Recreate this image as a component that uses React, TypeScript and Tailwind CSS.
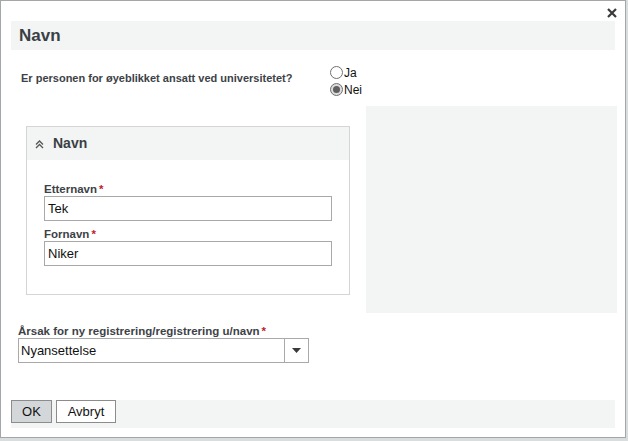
const font = { fontFamily: '"Liberation Sans", Arial, sans-serif' };

function Radio({ label, checked }: { label: string; checked?: boolean }) {
  return (
    <label className="flex items-center h-[17px] text-[12px] text-[#111]">
      <span
        className={`w-[13px] h-[13px] rounded-full border border-[#707070] flex items-center justify-center ${
          checked ? "bg-[#dcdcdc]" : "bg-white"
        }`}
      >
        {checked && <span className="w-[7px] h-[7px] rounded-full bg-[#5f5f5f]" />}
      </span>
      <span className="ml-[1px]">{label}</span>
    </label>
  );
}

function Field({ label, value }: { label: string; value: string }) {
  return (
    <div className="flex flex-col">
      <span className="text-[11.5px] font-bold text-[#3d4247] leading-[13px]">
        {label}
        <span className="text-[#c0202a] ml-[2px]">*</span>
      </span>
      <div className="h-[25px] border border-[#a9a9a9] flex items-center pl-[3px] text-[13px] text-[#111]">
        {value}
      </div>
    </div>
  );
}

export default function App() {
  return (
    <div className="w-[628px] h-[441px] bg-[#dadddd] overflow-hidden" style={font}>
      <div className="w-[626px] h-[438px] bg-white border border-[#a3a7a9] flex flex-col">
        <div className="h-[20px] flex justify-end items-center pr-[8px] pt-[4px]">
          <svg width="10" height="10" viewBox="0 0 10 10">
            <path d="M1 1 L9 9 M9 1 L1 9" stroke="#3a3a3a" strokeWidth="2.2" />
          </svg>
        </div>
        <div className="mx-[10px] h-[29px] bg-[#f3f4f4] flex items-center pl-[8px]">
          <span className="text-[17px] font-bold text-[#3a3f44]">Navn</span>
        </div>

        <div className="flex mt-[14px] h-[42px]">
          <div className="w-[329px] pl-[20px] pt-[6px] text-[11px] font-bold text-[#3d4247] whitespace-nowrap">
            Er personen for øyeblikket ansatt ved universitetet?
          </div>
          <div className="flex flex-col">
            <Radio label="Ja" />
            <Radio label="Nei" checked />
          </div>
        </div>

        <div className="flex items-start">
          <div className="ml-[25px] mt-[20px] w-[324px] border border-[#d3d5d6]">
            <div className="h-[33px] bg-[#f3f4f4] flex items-center pl-[8px]">
              <svg width="9" height="9" viewBox="0 0 9 9" className="mt-[1px]">
                <path d="M1 4.5 L4.5 1 L8 4.5 M1 8 L4.5 4.5 L8 8" stroke="#555" strokeWidth="1.3" fill="none" />
              </svg>
              <span className="ml-[9px] text-[14px] font-bold text-[#3a3f44]">Navn</span>
            </div>
            <div className="pt-[23px] pb-[28px] pl-[17px] pr-[17px] flex flex-col gap-[7px]">
              <Field label="Etternavn" value="Tek" />
              <Field label="Fornavn" value="Niker" />
            </div>
          </div>
          <div className="ml-[16px] w-[251px] h-[207px] bg-[#f3f4f4]" />
        </div>

        <div className="ml-[17px] mt-[12px] flex flex-col">
          <span className="text-[11.5px] font-bold text-[#3d4247] leading-[13px]">
            Årsak for ny registrering/registrering u/navn
            <span className="text-[#c0202a] ml-[2px]">*</span>
          </span>
          <div className="w-[291px] h-[25px] border border-[#a9a9a9] flex items-center">
            <span className="flex-1 pl-[2px] text-[13px] text-[#111]">Nyansettelse</span>
            <div className="w-[24px] h-full border-l border-[#a9a9a9] flex items-center justify-center">
              <svg width="9" height="5" viewBox="0 0 9 5">
                <path d="M0 0 L9 0 L4.5 5 Z" fill="#3a3a3a" />
              </svg>
            </div>
          </div>
        </div>

        <div className="mt-[37px] mx-[10px] h-[28px] bg-[#f3f4f4] flex items-start gap-[4px]">
          <button className="w-[41px] h-[23px] bg-[#d4d7d9] border border-[#8c8c8c] text-[13px] text-[#111]">
            OK
          </button>
          <button className="w-[60px] h-[23px] bg-white border border-[#8c8c8c] text-[13px] text-[#111]">
            Avbryt
          </button>
        </div>
      </div>
    </div>
  );
}
